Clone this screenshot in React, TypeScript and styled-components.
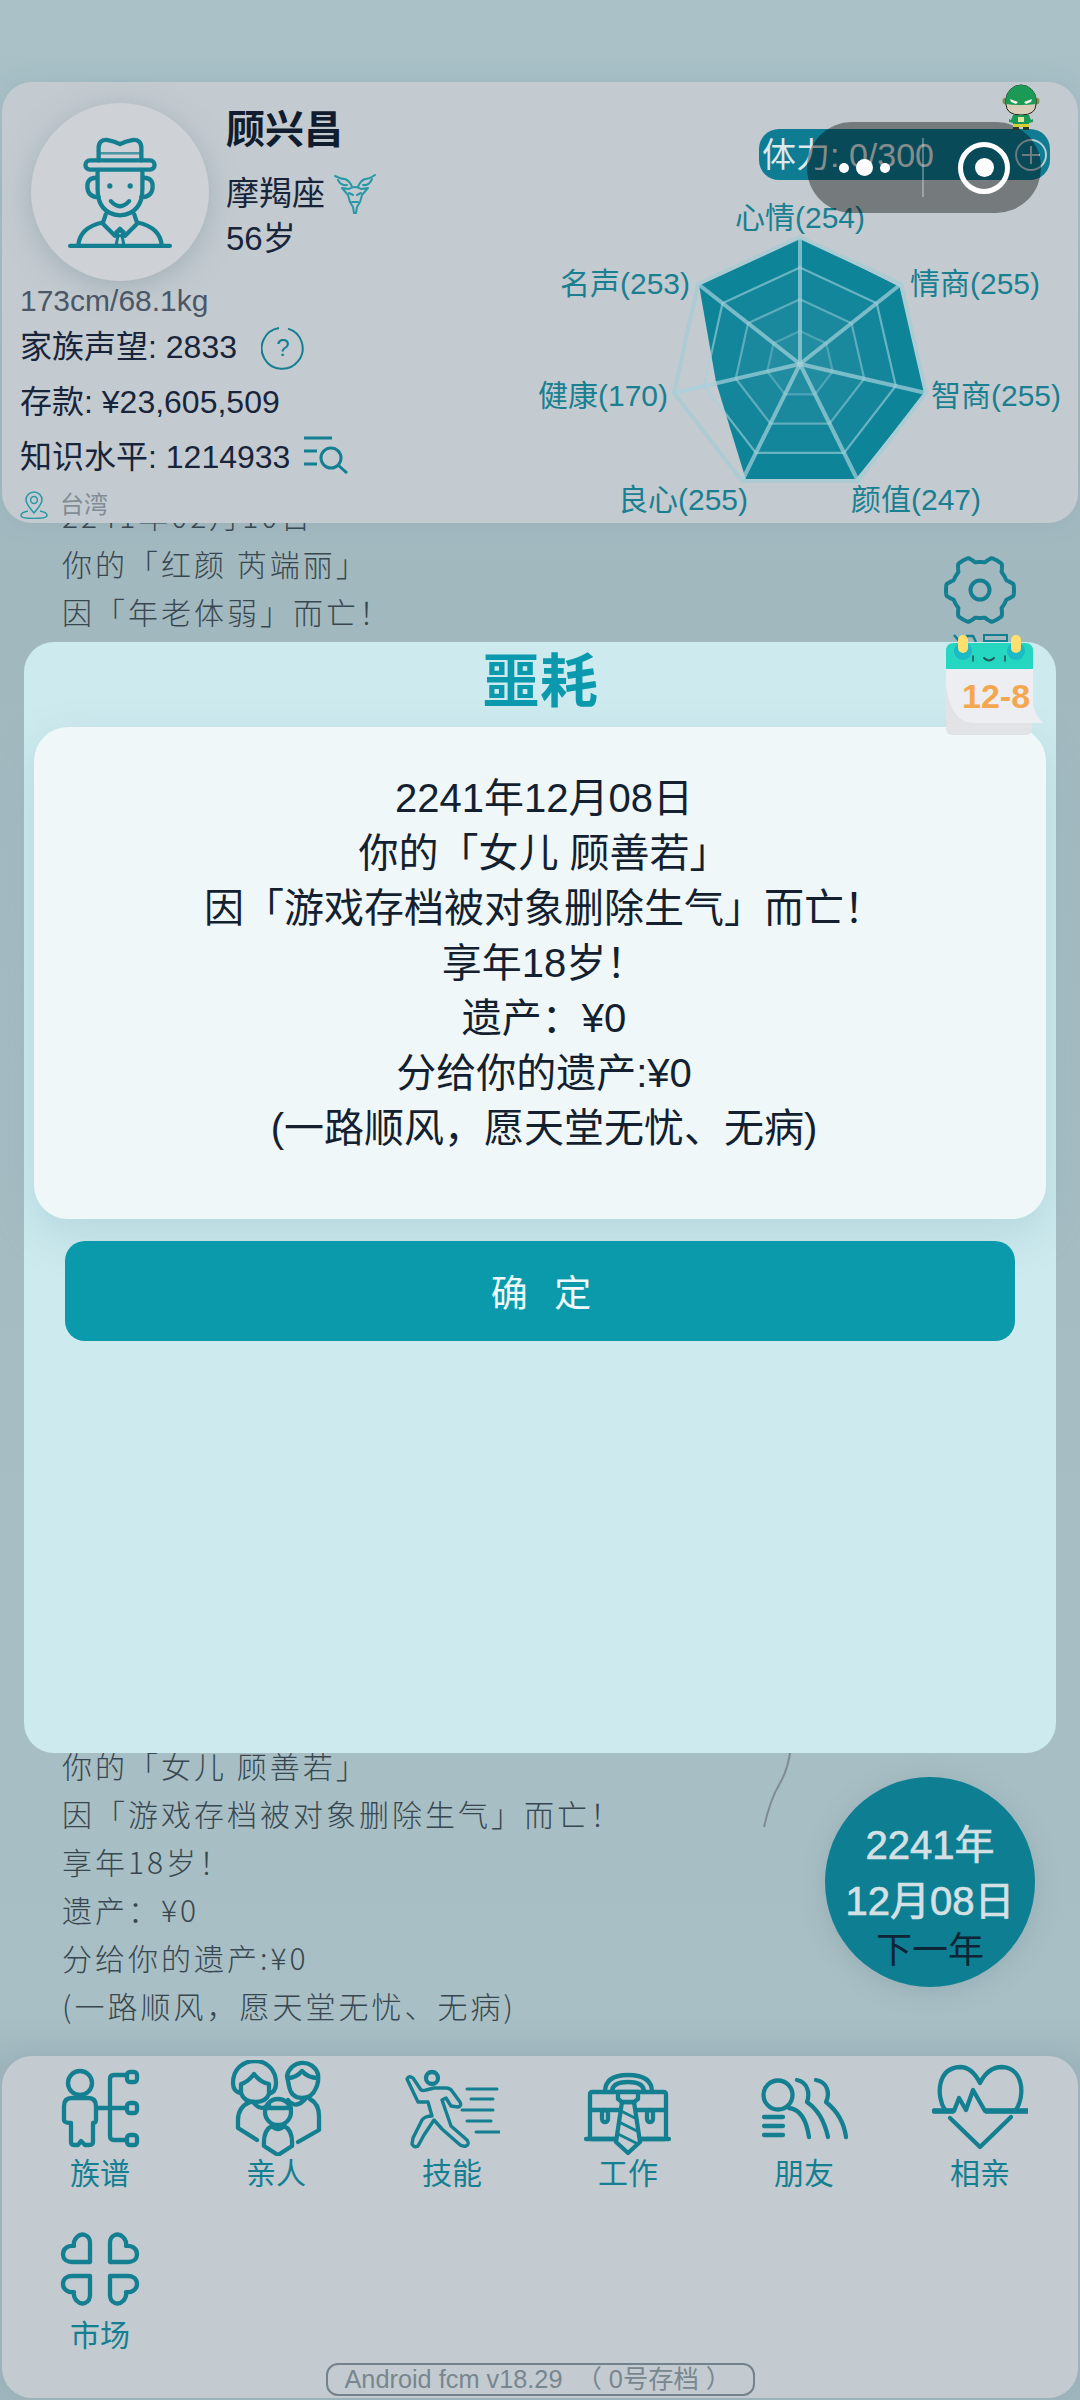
import React from "react";
import styled, { createGlobalStyle } from "styled-components";

const TEAL = "#157f92";
const SANS = `"Liberation Sans", "Noto Sans CJK SC", sans-serif`;

const Global = createGlobalStyle`
  html, body { margin: 0; padding: 0; background: #a6bdc3; }
  * { box-sizing: border-box; }
`;

const Page = styled.div`
  position: relative;
  width: 1080px;
  height: 2400px;
  overflow: hidden;
  display: flex;
  flex-direction: column;
  padding-top: 82px;
  font-family: ${SANS};
  color: #18243a;
  background: linear-gradient(180deg, #a9c1c7 0%, #a2b8bf 25%, #a6bdc3 60%, #a8bfc5 84%, #9fb6bd 86%);
`;

const Header = styled.header`
  position: relative;
  z-index: 2;
  flex: none;
  height: 441px;
  margin: 0 2px;
  display: flex;
  justify-content: space-between;
  background: #c3cbd0;
  border-radius: 30px;
  box-shadow: 0 0 24px rgba(90, 120, 130, 0.12);
`;

const ProfileColumn = styled.div`
  width: 520px;
  padding: 21px 0 0 18px;
`;

const ProfileTop = styled.div`
  display: flex;
  gap: 17px;
  margin-left: 11px;
`;

const Avatar = styled.div`
  flex: none;
  width: 178px;
  height: 178px;
  border-radius: 50%;
  background: #ced1d6;
  display: flex;
  align-items: center;
  justify-content: center;
  box-shadow: 0 6px 30px rgba(100, 125, 135, 0.35);
`;

const Identity = styled.div`
  padding-top: 5px;
`;

const Name = styled.div`
  font-size: 39px;
  line-height: 44px;
  font-weight: 700;
  color: #111c2e;
`;

const Sign = styled.div`
  display: flex;
  align-items: center;
  gap: 9px;
  margin-top: 18px;
  font-size: 33px;
  line-height: 48px;
`;

const Age = styled.div`
  margin-top: 1px;
  font-size: 33px;
  line-height: 40px;
`;

const Body = styled.div`
  margin-top: 2px;
  font-size: 30px;
  line-height: 36px;
  color: #4b5666;
`;

const Stat = styled.div`
  display: flex;
  align-items: center;
  font-size: 32px;
  line-height: 55px;
  white-space: nowrap;
  position: relative;
  top: 1px;
`;

const HelpBadge = styled.span`
  position: relative;
  display: inline-flex;
  align-items: center;
  justify-content: center;
  width: 44px;
  height: 44px;
  margin-left: 24px;
  font-size: 24px;
  line-height: 1;
  color: ${TEAL};
`;

const HelpRing = styled.svg`
  position: absolute;
  inset: 0;
`;

const SearchIcon = styled.svg`
  margin: -5px 0 0 13px;
`;

const Place = styled.div`
  display: flex;
  align-items: center;
  gap: 12px;
  margin-top: 3px;
  font-size: 24px;
  line-height: 36px;
  color: #818c95;
`;

const RightPanel = styled.div`
  width: 538px;
  display: flex;
  flex-direction: column;
  align-items: flex-end;
`;

const Stamina = styled.div`
  width: 291px;
  height: 51px;
  margin: 47px 28px 0 0;
  padding: 0 2px 5px 3px;
  display: flex;
  align-items: center;
  justify-content: space-between;
  border-radius: 20px;
  background: #0e7c93;
  color: #dfe8ea;
  font-size: 34px;
  white-space: nowrap;
`;

const PlusIcon = styled.svg`
  flex: none;
  margin-top: 5px;
`;

const RadarCanvas = styled.div`
  position: relative;
  width: 538px;
  flex: 1;
`;

const RadarSvg = styled.svg`
  position: absolute;
  left: 0;
  top: 0;
`;

const RadarLabel = styled.span<{ $x: number; $y: number }>`
  position: absolute;
  left: ${(p) => p.$x - 540}px;
  top: ${(p) => p.$y - 180}px;
  transform: translate(-50%, -50%);
  font-size: 30px;
  line-height: 36px;
  white-space: nowrap;
  color: #1a7f90;
`;

const Capsule = styled.div`
  position: absolute;
  z-index: 5;
  left: 807px;
  top: 122px;
  width: 234px;
  height: 91px;
  border-radius: 45px;
  background: rgba(0, 0, 0, 0.4);
  display: flex;
  align-items: center;
`;

const CapsuleDots = styled.div`
  width: 115px;
  display: flex;
  align-items: center;
  justify-content: center;
  gap: 7px;
`;

const Dot = styled.span<{ $size: number }>`
  width: ${(p) => p.$size}px;
  height: ${(p) => p.$size}px;
  border-radius: 50%;
  background: #fff;
`;

const CapsuleDivider = styled.span`
  width: 2px;
  height: 59px;
  background: rgba(255, 255, 255, 0.3);
`;

const CapsuleTarget = styled.div`
  flex: 1;
  display: flex;
  justify-content: center;
  padding-left: 3px;
`;

const TargetRing = styled.span`
  width: 52px;
  height: 52px;
  border: 5px solid #fff;
  border-radius: 50%;
  display: flex;
  align-items: center;
  justify-content: center;
`;

const TargetCore = styled.span`
  width: 19px;
  height: 19px;
  border-radius: 50%;
  background: #fff;
`;

const Mascot = styled.svg`
  position: absolute;
  z-index: 6;
  left: 1002px;
  top: 84px;
`;

const LogArea = styled.main`
  position: relative;
  flex: 1;
  margin-top: -32px;
  padding-left: 62px;
`;

const LogLine = styled.div`
  font-family: "Noto Sans CJK SC", ${SANS};
  font-weight: 300;
  font-size: 30px;
  line-height: 48px;
  letter-spacing: 3px;
  white-space: nowrap;
  color: #38474f;
`;

const LogSkipped = styled.div`
  height: 1106px;
`;

const Crack = styled.svg`
  position: absolute;
  left: 760px;
  top: 1254px;
`;

const GearIcon = styled.svg`
  position: absolute;
  z-index: 1;
  left: 930px;
  top: 550px;
`;

const Dialog = styled.section`
  position: absolute;
  z-index: 3;
  left: 24px;
  top: 642px;
  width: 1032px;
  height: 1111px;
  border-radius: 30px;
  background: #cdeaee;
  padding: 0 10px;
`;

const DialogTitle = styled.h1`
  margin: 0;
  height: 85px;
  font-size: 58px;
  line-height: 80px;
  font-weight: 700;
  text-align: center;
  color: #0b9aad;
`;

const DialogCard = styled.div`
  height: 492px;
  padding: 44px 0 0 8px;
  border-radius: 34px;
  background: #eff7f9;
  box-shadow: 0 16px 40px rgba(120, 170, 175, 0.28);
  text-align: center;
  font-size: 40px;
  line-height: 55px;
  color: #141f30;
`;

const ConfirmButton = styled.button`
  display: block;
  width: 950px;
  height: 100px;
  margin: 22px 0 0 31px;
  padding: 0 0 0 10px;
  border: 0;
  border-radius: 20px;
  background: #0a9aac;
  color: #eef9fa;
  font-family: ${SANS};
  font-size: 37px;
  letter-spacing: 8px;
  white-space: pre;
`;

const CalendarIcon = styled.svg`
  position: absolute;
  z-index: 4;
  left: 946px;
  top: 635px;
`;

const NextYear = styled.button`
  position: absolute;
  z-index: 2;
  left: 825px;
  top: 1777px;
  width: 210px;
  height: 210px;
  padding: 40px 0 0;
  border: 0;
  border-radius: 50%;
  background: #0e7f92;
  box-shadow: 0 4px 24px rgba(90, 120, 130, 0.25);
  display: flex;
  flex-direction: column;
  align-items: center;
  font-family: ${SANS};
`;

const NextYearDate = styled.span`
  font-size: 40px;
  line-height: 56px;
  color: #d5e0e5;
  white-space: nowrap;
  -webkit-text-stroke: 0.7px #d5e0e5;
`;

const NextYearAction = styled.span`
  font-size: 36px;
  line-height: 44px;
  color: #0d2536;
`;

const Nav = styled.nav`
  flex: none;
  height: 342px;
  margin: 0 2px 2px;
  padding-top: 4px;
  border-radius: 30px;
  background: #c3cbd0;
  box-shadow: 0 0 20px rgba(90, 120, 130, 0.1);
  display: flex;
  flex-direction: column;
  align-items: center;
`;

const NavGrid = styled.div`
  width: 100%;
  padding-left: 10px;
  display: grid;
  grid-template-columns: repeat(6, 176px);
  grid-template-rows: 162px 132px;
`;

const NavItem = styled.div`
  display: flex;
  flex-direction: column;
  align-items: center;
`;

const NavIconSvg = styled.svg`
  display: block;
  fill: none;
  stroke: ${TEAL};
  stroke-width: 4.3;
  stroke-linecap: round;
  stroke-linejoin: round;
`;

const NavLabel = styled.span`
  font-size: 30px;
  line-height: 36px;
  color: #157f92;
`;

const VersionBadge = styled.div`
  width: 429px;
  height: 33px;
  margin-top: 9px;
  padding-left: 17px;
  border: 2px solid #75828c;
  border-radius: 12px;
  font-size: 25.3px;
  line-height: 29px;
  white-space: pre;
  color: #78868f;
`;

/* ---------- drawings ---------- */

const AvatarMan = () => (
  <svg width="106" height="114" viewBox="68 133 104 112" fill="none" stroke={TEAL} strokeWidth="4.2" strokeLinecap="round" strokeLinejoin="round">
    <path d="M99 158V146Q99 137 108 138Q115 139 120 142Q125 139 132 138Q141 137 141 146V158" />
    <path d="M99 151H141" strokeWidth="2.5" opacity="0.7" />
    <rect x="86" y="158" width="68" height="9" rx="4.5" />
    <path d="M98 168V186Q98 210 120 212Q142 210 142 186V168" />
    <path d="M97 175Q87 175 88 185Q89 194 99 194M143 175Q153 175 152 185Q151 194 141 194" />
    <circle cx="110" cy="183" r="2.6" fill={TEAL} stroke="none" />
    <circle cx="130" cy="183" r="2.6" fill={TEAL} stroke="none" />
    <path d="M111 198Q120 208 129 198" />
    <path d="M106 211L103 220L115 232L120 225L125 232L137 220L134 211" />
    <path d="M116 228L120 225L124 228L122 232H118ZM118 232L116 242M122 232L124 242" strokeWidth="3" />
    <path d="M79 242Q80 224 103 219M161 242Q160 224 137 219" />
    <path d="M71 242H169" />
  </svg>
);

const GoatIcon = () => (
  <svg width="42" height="41" viewBox="0 0 42 41" fill="none" stroke="#2a97a6" strokeWidth="2" strokeLinecap="round" strokeLinejoin="round">
    <path d="M1 2Q7 5 11 5Q16 7 18 13M41 1Q35 5 31 5Q26 7 24 13" />
    <path d="M4 6Q7 12 13 11M38 5Q35 12 29 11" />
    <path d="M8 14L15 15Q18 13 21 13Q24 13 27 15L34 14L28 21L26 28L23 33L22 39H20L19 33L16 28L14 21Z" />
    <path d="M15 19L19 21M27 19L23 21M18 28H24" />
  </svg>
);

const PinIcon = () => (
  <svg width="28" height="28" viewBox="0 0 28 28" fill="none" stroke="#2a97a6" strokeWidth="1.5">
    <path d="M14 22C10 17 6 13 6 9A8 8 0 0 1 22 9C22 13 18 17 14 22Z" />
    <circle cx="14" cy="9" r="3.4" />
    <path d="M8 20C3 21 1 23 1 24.5C1 26.5 6 27.5 14 27.5C22 27.5 27 26.5 27 24.5C27 23 25 21 20 20" />
  </svg>
);

const GEAR_PATH = (() => {
  const pts: string[] = [];
  for (let i = 0; i < 180; i++) {
    const t = (i / 180) * Math.PI * 2;
    const s = Math.max(-1, Math.min(1, 1.9 * Math.cos(6 * t)));
    const r = 31 + 3 * s;
    pts.push(`${(50 + r * Math.cos(t)).toFixed(2)} ${(40 + r * Math.sin(t)).toFixed(2)}`);
  }
  return `M${pts.join("L")}Z`;
})();

const HEART_TL = "M38 40V21C38 13 30 10 25 15C21 19 22 24 22 24C17 23 11 26 11 32C11 38 16 40 20 40Z";

const navIcons: Record<string, React.ReactNode> = {
  family: (
    <>
      <circle cx="28" cy="23" r="12" />
      <path d="M20 38H36Q44 38 44 46V60Q44 63 41 63V82Q41 85 37 85H33L29 81L26 85H22Q19 85 19 82V63Q12 63 12 60V46Q12 38 20 38Z" />
      <path d="M74 15H62Q58 15 58 19V76Q58 80 62 80H74M44 48H74" />
      <rect x="75" y="12" width="10" height="10" rx="3" />
      <rect x="75" y="43" width="10" height="10" rx="3" />
      <rect x="75" y="75" width="10" height="10" rx="3" />
    </>
  ),
  kin: (
    <>
      <path d="M13 33Q5 32 5 23C5 9 15 1 27 1C39 1 48 10 48 23Q48 32 41 34" />
      <path d="M13 33V24Q20 22 26 14Q32 22 41 24V34Q38 42 27 42Q16 42 13 33Z" />
      <path d="M59 16A16 16 0 0 1 90 14Q91 22 88 28Q84 38 74 38Q63 38 61 26Z" />
      <path d="M60 18Q68 18 74 11Q80 18 90 18" />
      <path d="M22 42Q10 47 10 60V68L29 80M25 42Q33 52 41 45M60 40Q68 50 78 38M82 39Q91 44 91 56V70L70 82" />
      <circle cx="50" cy="52" r="13" />
      <path d="M37 48H63" />
      <path d="M44 66Q35 70 36 86L50 95L64 86Q65 70 56 66Q50 72 44 66Z" />
    </>
  ),
  skill: (
    <>
      <circle cx="28" cy="18" r="6" />
      <path d="M3 19Q5 15 9 18L17 30Q19 31 22 30L30 28H42Q46 28 48 31L56 42Q58 46 54 47L47 46L42 38L38 40L47 66L63 80Q66 84 62 86Q58 87 55 84L38 69L30 60L20 75L14 86Q10 88 8 84L9 78L18 60Q21 56 28 56L24 42L14 42Z" strokeWidth="3.4" />
      <path d="M63 29H93M67 39H89M58 50H89M63 61H87M72 72H96" strokeWidth="3" />
    </>
  ),
  work: (
    <>
      <rect x="10" y="32" width="76" height="47" rx="2" />
      <path d="M6 79H89" />
      <path d="M25 32Q25 15 48 15Q72 15 72 32M32 32Q32 22 48 22Q64 22 64 32" />
      <path d="M10 50H86" />
      <rect x="22" y="50" width="6" height="12" rx="3" />
      <rect x="67" y="50" width="6" height="12" rx="3" />
      <path d="M42 42L36 82L48 93L60 82L54 42Z" fill="#c3cbd0" />
      <path d="M38 32H58V39L54 42H42L38 39Z" fill="#c3cbd0" />
      <path d="M41 51L55 58M39 62L57 71M38 74L58 84" strokeWidth="3" />
    </>
  ),
  friend: (
    <>
      <circle cx="22" cy="35" r="14.5" />
      <path d="M8 57H27M8 66H27M8 75H27" />
      <path d="M33 48Q49 50 53 77M41 20C52 22 54 34 51 42C62 50 68 60 72 77M60 20C72 22 74 34 70 42C80 50 88 62 90 77" />
    </>
  ),
  date: (
    <>
      <path d="M13 50C4 36 5 8 28 7C38 7 44 15 48 23C52 15 58 7 70 7C92 8 93 36 84 50" />
      <path d="M18 58L48 87L79 57" />
      <path d="M1 51H22L27 38L34 50L41 30L53 51H96" />
      <path d="M1 51H22M53 51H96" strokeWidth="5.5" strokeLinecap="butt" />
    </>
  ),
  market: (
    <>
      <path d={HEART_TL} />
      <path d={HEART_TL} transform="matrix(-1 0 0 1 96 0)" />
      <path d={HEART_TL} transform="matrix(1 0 0 -1 0 94)" />
      <path d={HEART_TL} transform="matrix(-1 0 0 -1 96 94)" />
    </>
  ),
};

const navItems = [
  ["family", "族谱"],
  ["kin", "亲人"],
  ["skill", "技能"],
  ["work", "工作"],
  ["friend", "朋友"],
  ["date", "相亲"],
  ["market", "市场"],
];

const OUTER: [number, number][] = [
  [800, 237],
  [901, 284],
  [926, 393],
  [858, 481],
  [742, 481],
  [674, 393],
  [698, 284],
];
const DATA = "800,237 900,287 925,393 855,480 746,480 716,382 699,285";
const CX = 800;
const CY = 364;
const ring = (k: number) =>
  OUTER.map(([x, y]) => `${CX + (x - CX) * k},${CY + (y - CY) * k}`).join(" ");

const radarLabels: [string, number, number][] = [
  ["心情(254)", 800, 218],
  ["名声(253)", 625, 284],
  ["情商(255)", 975, 284],
  ["健康(170)", 603, 396],
  ["智商(255)", 996, 396],
  ["良心(255)", 683, 500],
  ["颜值(247)", 916, 500],
];

export default function App() {
  return (
    <Page>
      <Global />
      <Header>
        <ProfileColumn>
          <ProfileTop>
            <Avatar>
              <AvatarMan />
            </Avatar>
            <Identity>
              <Name>顾兴昌</Name>
              <Sign>
                摩羯座
                <GoatIcon />
              </Sign>
              <Age>56岁</Age>
            </Identity>
          </ProfileTop>
          <Body>173cm/68.1kg</Body>
          <Stat>
            家族声望: 2833
            <HelpBadge>
              <HelpRing width="44" height="44" viewBox="0 0 44 44" fill="none" stroke={TEAL} strokeWidth="2">
                <path d="M27 2.6A20.5 20.5 0 1 1 18 2" />
              </HelpRing>
              ?
            </HelpBadge>
          </Stat>
          <Stat>存款: ¥23,605,509</Stat>
          <Stat>
            知识水平: 1214933
            <SearchIcon width="46" height="38" viewBox="0 0 46 38" fill="none" stroke={TEAL} strokeWidth="3">
              <path d="M1 2H29M1 15H14M1 28H14" />
              <circle cx="28" cy="22" r="10" />
              <path d="M35 29L44 37" />
            </SearchIcon>
          </Stat>
          <Place>
            <PinIcon />
            台湾
          </Place>
        </ProfileColumn>
        <RightPanel>
          <Stamina>
            体力: 0/300
            <PlusIcon width="34" height="34" viewBox="0 0 34 34" fill="none" stroke="#b7cdd4" strokeWidth="2">
              <circle cx="17" cy="17" r="15" />
              <path d="M17 8V26M8 17H26" />
            </PlusIcon>
          </Stamina>
          <RadarCanvas>
            <RadarSvg width="538" height="343" viewBox="540 180 538 343" fill="none">
              <polygon points={DATA} fill="#0e8499" />
              <polygon points={ring(0.76)} fill="rgba(255,255,255,0.025)" />
              <polygon points={ring(0.51)} fill="rgba(255,255,255,0.03)" />
              <polygon points={ring(0.26)} fill="rgba(255,255,255,0.04)" />
              <polygon points={ring(1)} stroke="#adcbd3" strokeWidth="4" />
              <polygon points={ring(0.76)} stroke="rgba(165,210,220,0.6)" strokeWidth="2.2" />
              <polygon points={ring(0.51)} stroke="rgba(165,210,220,0.5)" strokeWidth="2.2" />
              <polygon points={ring(0.26)} stroke="rgba(165,210,220,0.35)" strokeWidth="2.2" />
              {OUTER.map(([x, y]) => (
                <line key={`${x}-${y}`} x1={CX} y1={CY} x2={x} y2={y} stroke="rgba(165,210,220,0.7)" strokeWidth="4" />
              ))}
            </RadarSvg>
            {radarLabels.map(([text, x, y]) => (
              <RadarLabel key={text} $x={x} $y={y}>
                {text}
              </RadarLabel>
            ))}
          </RadarCanvas>
        </RightPanel>
      </Header>

      <LogArea>
        <LogLine>2241年02月10日</LogLine>
        <LogLine>你的「红颜 芮端丽」</LogLine>
        <LogLine>因「年老体弱」而亡！</LogLine>
        <LogSkipped />
        <LogLine>你的「女儿 顾善若」</LogLine>
        <LogLine>因「游戏存档被对象删除生气」而亡！</LogLine>
        <LogLine>享年18岁！</LogLine>
        <LogLine>遗产：¥0</LogLine>
        <LogLine>分给你的遗产:¥0</LogLine>
        <LogLine>(一路顺风，愿天堂无忧、无病)</LogLine>
        <Crack width="36" height="84" viewBox="0 0 36 84" fill="none" stroke="#7f8d93" strokeWidth="2">
          <path d="M31 2Q28 25 20 38Q10 55 4 82" />
        </Crack>
      </LogArea>

      <Nav>
        <NavGrid>
          {navItems.map(([key, label]) => (
            <NavItem key={key}>
              <NavIconSvg width="96" height="96" viewBox="0 0 96 96">
                {navIcons[key]}
              </NavIconSvg>
              <NavLabel>{label}</NavLabel>
            </NavItem>
          ))}
        </NavGrid>
        <VersionBadge>Android fcm v18.29  （ 0号存档 ）</VersionBadge>
      </Nav>

      <GearIcon width="100" height="95" viewBox="0 0 100 95" fill="none" stroke={TEAL} strokeWidth="4">
        <path d={GEAR_PATH} strokeLinejoin="round" />
        <circle cx="50" cy="40" r="9.5" />
        <path d="M24 85L30 92H34L37 86H43L46 92" strokeWidth="2.5" />
        <rect x="54" y="85" width="23" height="6" strokeWidth="2" />
      </GearIcon>

      <Dialog>
        <DialogTitle>噩耗</DialogTitle>
        <DialogCard>
          <div>2241年12月08日</div>
          <div>你的「女儿 顾善若」</div>
          <div>因「游戏存档被对象删除生气」而亡！</div>
          <div>享年18岁！</div>
          <div>遗产：¥0</div>
          <div>分给你的遗产:¥0</div>
          <div>(一路顺风，愿天堂无忧、无病)</div>
        </DialogCard>
        <ConfirmButton>确 定</ConfirmButton>
      </Dialog>

      <CalendarIcon width="100" height="100" viewBox="0 0 100 100">
        <rect x="0" y="30" width="86" height="70" rx="6" fill="#e1e3e5" />
        <path d="M0 34H87V68Q89 82 98 88H26Q4 86 0 50Z" fill="#eceef1" />
        <path d="M0 34V16Q0 8 8 8H79Q87 8 87 16V34Z" fill="#25d6c0" />
        <circle cx="17" cy="16" r="9" fill="#1cb9c6" />
        <circle cx="70" cy="16" r="9" fill="#1cb9c6" />
        <rect x="12" y="0" width="10" height="18" rx="5" fill="#ffdf6e" />
        <rect x="65" y="0" width="10" height="18" rx="5" fill="#ffdf6e" />
        <path d="M27 21V26M59 21V26" stroke="#225a5a" strokeWidth="1.6" strokeLinecap="round" />
        <path d="M38 23Q43 28 48 23" stroke="#225a5a" strokeWidth="2" fill="none" strokeLinecap="round" />
        <text x="16" y="73" fontFamily="Liberation Sans" fontWeight="700" fontSize="34" fill="#f5a74f">12-8</text>
      </CalendarIcon>

      <NextYear>
        <NextYearDate>2241年</NextYearDate>
        <NextYearDate>12月08日</NextYearDate>
        <NextYearAction>下一年</NextYearAction>
      </NextYear>

      <Capsule>
        <CapsuleDots>
          <Dot $size={10} />
          <Dot $size={17} />
          <Dot $size={10} />
        </CapsuleDots>
        <CapsuleDivider />
        <CapsuleTarget>
          <TargetRing>
            <TargetCore />
          </TargetRing>
        </CapsuleTarget>
      </Capsule>

      <Mascot width="38" height="46" viewBox="0 0 38 46">
        <circle cx="4" cy="17" r="3.5" fill="#7d8f55" />
        <circle cx="34" cy="17" r="3.5" fill="#7d8f55" />
        <path d="M4 16A15 15 0 0 1 34 16V20Q34 31 19 31Q4 31 4 20Z" fill="#d8cdb9" stroke="#222" strokeWidth="1" />
        <path d="M4 16A15 15 0 0 1 34 16V20Q27 21 19 21Q11 21 4 20Z" fill="#1c9a55" />
        <path d="M8 15L16 18L14 20L9 18ZM30 15L22 18L24 20L29 18Z" fill="#f2f2ea" />
        <path d="M11 31H27L29 36L31 35V38L27 39V42H11V39L7 38V35L9 36Z" fill="#1c9a55" />
        <rect x="16" y="33" width="6" height="5" fill="#d8e8a0" />
        <rect x="11" y="40" width="16" height="3" fill="#d6cf3a" />
        <rect x="11" y="43" width="6" height="3" fill="#2a3a2a" />
        <rect x="21" y="43" width="6" height="3" fill="#2a3a2a" />
      </Mascot>
    </Page>
  );
}
